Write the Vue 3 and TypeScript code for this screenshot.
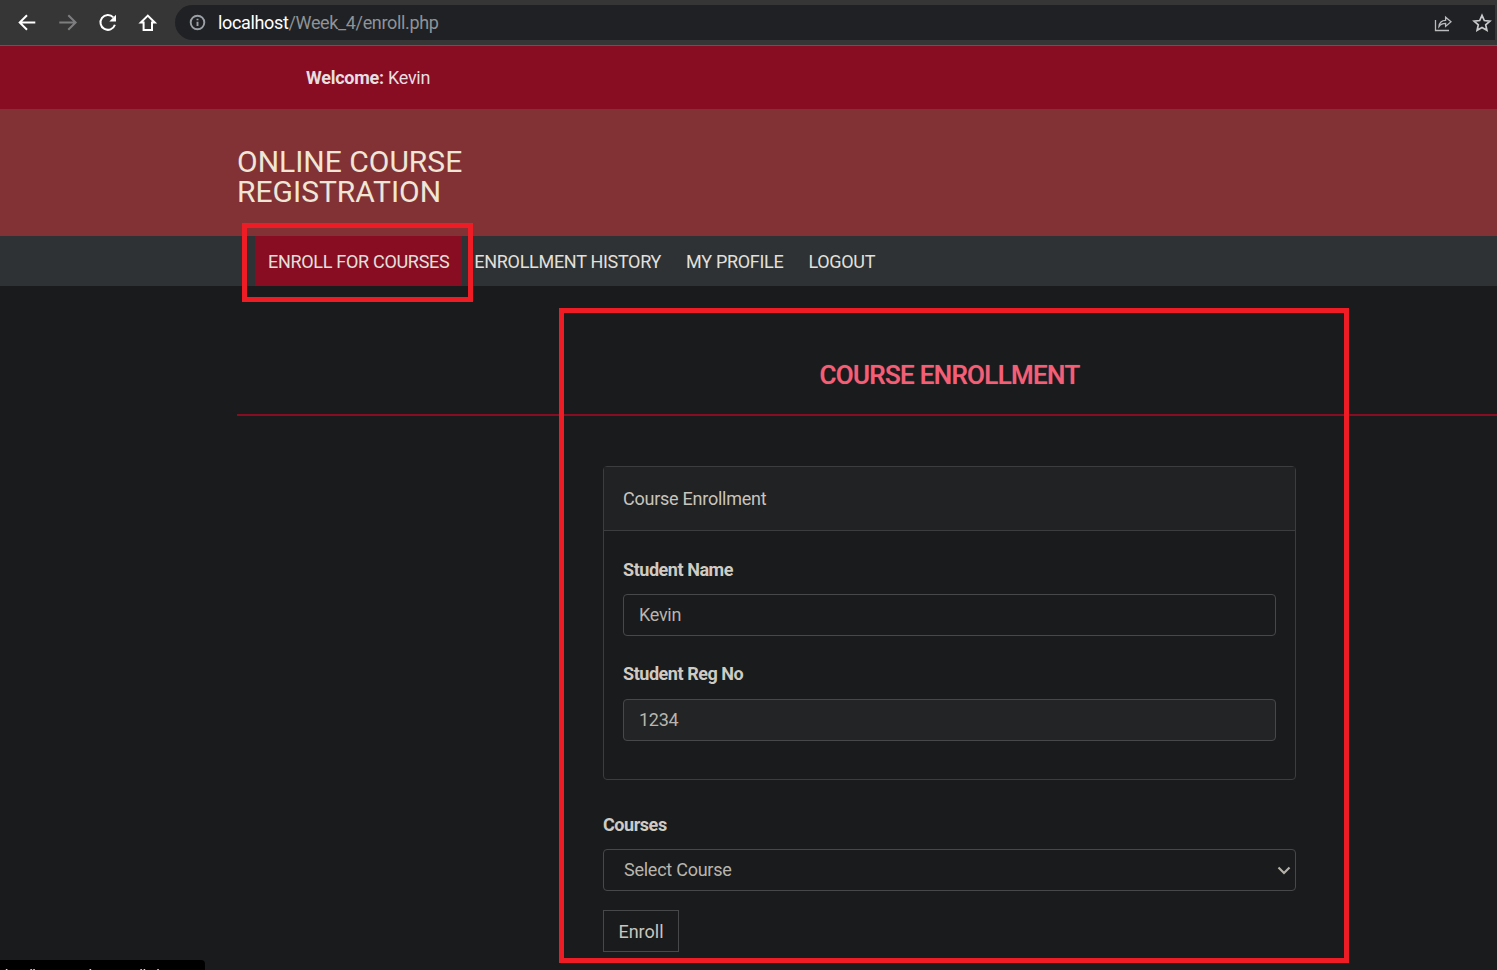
<script setup lang="ts">
import { ref } from 'vue'

const navItems = ['ENROLL FOR COURSES', 'ENROLLMENT HISTORY', 'MY PROFILE', 'LOGOUT']
const studentName = ref('Kevin')
const regNo = ref('1234')
</script>

<template>
  <div class="page">
    <!-- browser toolbar -->
    <div class="browser-bar">
      <div class="nav-icons">
        <svg class="ic" viewBox="0 0 24 24"><path d="M20.300 11.500H5M12 4.200 4.700 11.500 12 18.800" /></svg>
        <svg class="ic dim" viewBox="0 0 24 24"><path d="M4.300 11.500H20M13.300 4.200l7.300 7.300-7.300 7.300" /></svg>
        <svg class="ic" viewBox="0 0 24 24"><path d="M19.900 13.800A7.400 7.400 0 1 1 18.300 6.400" /><path class="fill" d="M21 3.800v6.700h-6.700z" /></svg>
        <svg class="ic" viewBox="0 0 24 24"><path d="M12.800 4.600 5.800 11.600H8.600v7.400h8.400v-7.400h2.800z" /></svg>
      </div>
      <div class="url-pill">
        <svg class="info" viewBox="0 0 16 16">
          <circle cx="8" cy="8" r="6.400" />
          <path d="M8 7.200v4M8 4.400v1.500" />
        </svg>
        <span class="url"><span class="host">localhost</span>/Week_4/enroll.php</span>
        <svg class="share" viewBox="0 0 20 20">
          <path d="M2.500 7v10.500h13.500M6 13.500c.4-4 3-6.200 6.600-6.200V4.200l5.400 4.600-5.400 4.600v-3c-2.800 0-5 .9-6.600 3.100z" />
        </svg>
        <svg class="star" viewBox="0 0 20 20">
          <path d="M10 2.300l2.300 5.200 5.600.6-4.200 3.700 1.200 5.500L10 14.500l-4.900 2.800 1.200-5.500-4.200-3.700 5.600-.6z" />
        </svg>
      </div>
    </div>

    <div class="welcome-bar">
      <div class="welcome"><strong>Welcome:</strong> Kevin</div>
    </div>

    <header class="banner">
      <h1>ONLINE COURSE<br />REGISTRATION</h1>
    </header>

    <nav class="main-nav">
      <a
        v-for="(item, i) in navItems"
        :key="item"
        class="nav-link"
        :class="{ active: i === 0 }"
      >{{ item }}</a>
    </nav>

    <main class="content">
      <div class="head-row">
        <h2>COURSE ENROLLMENT</h2>
      </div>

      <form class="enroll-form" @submit.prevent>
        <section class="card">
          <div class="card-header">Course Enrollment</div>
          <div class="card-body">
            <label>Student Name</label>
            <input v-model="studentName" class="field" type="text" />
            <label class="reg-label">Student Reg No</label>
            <input v-model="regNo" class="field readonly" type="text" readonly />
          </div>
        </section>

        <label class="courses-label">Courses</label>
        <div class="select-box">
          <span class="select-text">Select Course</span>
          <svg class="chevron" viewBox="0 0 16 16"><path d="M2.500 5.500 8 11l5.500-5.500" /></svg>
        </div>

        <button class="enroll-btn" type="submit">Enroll</button>
      </form>
    </main>

    <!-- red annotation frames drawn over the capture -->
    <div class="mark mark-nav"></div>
    <div class="mark mark-form"></div>

    <div class="status-tip">localhost/Week_4/enroll.php</div>
  </div>
</template>

<style scoped>
.page {
  position: relative;
  height: 970px;
  overflow: hidden;
  background-color: #191b1d;
  color: #c9c5bd;
  font-family: Roboto, "Liberation Sans", sans-serif;
}

.browser-bar {
  height: 46px;
  box-sizing: border-box;
  padding: 5px 0 0 15px;
  display: flex;
  background-color: #363636;
  border-bottom: 1px solid #5a5a58;
}

.nav-icons {
  display: flex;
  gap: 16px;
  width: 160px;
  height: 35px;
  align-items: center;
}

.ic {
  width: 24px;
  height: 24px;
  fill: none;
  stroke: #fff;
  stroke-width: 2;
}

.ic.dim { stroke: #7d7e80; }
.ic .fill { fill: #fff; stroke: none; }

.url-pill {
  flex: 1;
  height: 35px;
  display: flex;
  align-items: center;
  padding-left: 14px;
  background-color: #202124;
  border-radius: 18px 0 0 18px;
  margin-right: 2px;
}

.info {
  width: 17px;
  height: 17px;
  fill: none;
  stroke: #9aa0a6;
  stroke-width: 1.800;
}

.url {
  flex: 1;
  margin-left: 12px;
  font-size: 18px;
  color: #8f9397;
  letter-spacing: -0.35px;
}

.host { color: #fff; }

.share {
  width: 20px;
  height: 20px;
  margin-right: 19px;
  fill: none;
  stroke: #b9bbbe;
  stroke-width: 1.300;
}

.star {
  width: 20px;
  height: 20px;
  margin-right: 3px;
  fill: none;
  stroke: #c8cacc;
  stroke-width: 1.700;
}

.welcome-bar {
  height: 63px;
  display: flex;
  align-items: center;
  padding-left: 306px;
  background-color: #880d23;
  color: #e6dfe0;
  font-size: 18px;
  letter-spacing: -0.27px;
}

.banner {
  height: 127px;
  box-sizing: border-box;
  padding: 38px 0 0 237px;
  background-color: #823235;
}

h1 {
  margin: 0;
  font-size: 30px;
  font-weight: 400;
  line-height: 30px;
  color: #efe6d6;
}

.main-nav {
  height: 50px;
  display: flex;
  padding-left: 255px;
  background-color: #2e3235;
}

.nav-link {
  height: 50px;
  line-height: 52px;
  padding-right: 25px;
  font-size: 18px;
  letter-spacing: -0.3px;
  color: #e2e0dc;
  white-space: nowrap;
}

.nav-link.active {
  padding: 0 13px;
  margin-right: 12px;
  background-color: #880d23;
}

.content {
  margin-left: 237px;
}

.head-row {
  height: 130px;
  box-sizing: border-box;
  padding-top: 71px;
  border-bottom: 2px solid #880d23;
}

h2 {
  margin: 0 0 0 326px;
  width: 773px;
  text-align: center;
  font-size: 26px;
  font-weight: 500;
  line-height: 36px;
  letter-spacing: -0.7px;
  color: #f45f76;
  text-shadow: 0 0 1px rgba(244, 95, 118, 0.6);
}

.enroll-form {
  width: 693px;
  margin: 50px 0 0 366px;
  font-size: 18px;
}

.card {
  height: 314px;
  box-sizing: border-box;
  background-color: #191b1d;
  border: 1px solid #3b3d3f;
  border-radius: 4px;
}

.card-header {
  height: 64px;
  box-sizing: border-box;
  padding: 0 19px;
  line-height: 63px;
  background-color: #202224;
  border-bottom: 1px solid #3b3d3f;
  letter-spacing: -0.25px;
}

.card-body {
  padding: 26px 19px 0;
}

label {
  display: block;
  height: 28px;
  line-height: 26px;
  margin-bottom: 9px;
  font-weight: 700;
  letter-spacing: -0.45px;
  color: #cfcbc3;
}

.reg-label {
  margin-bottom: 10px;
}

.field {
  display: block;
  width: 100%;
  height: 42px;
  box-sizing: border-box;
  padding: 0 15px 2px;
  margin-bottom: 25px;
  background-color: #191b1d;
  border: 1px solid #46484a;
  border-radius: 4px;
  font: inherit;
  letter-spacing: -0.3px;
  color: #b9b5ad;
  outline: none;
}

.field.readonly { background-color: #222426; }

.courses-label {
  margin-top: 32px;
}

.select-box {
  height: 42px;
  box-sizing: border-box;
  padding: 0 3px 0 20px;
  display: flex;
  align-items: center;
  justify-content: space-between;
  border: 1px solid #46484a;
  border-radius: 4px;
  letter-spacing: -0.25px;
  color: #b9b5ad;
}

.select-text {
  margin-bottom: 2px;
}

.chevron {
  width: 16px;
  height: 16px;
  fill: none;
  stroke: #b5b1a9;
  stroke-width: 2.200;
}

.enroll-btn {
  display: block;
  width: 76px;
  height: 42px;
  margin-top: 19px;
  padding: 0;
  background-color: transparent;
  border: 1px solid #46484a;
  font: inherit;
  color: #c9c5bd;
}

.mark {
  position: absolute;
  box-sizing: border-box;
  border: 5px solid #ee1c25;
}

.mark-nav {
  left: 242px;
  top: 223px;
  width: 231px;
  height: 79px;
}

.mark-form {
  left: 559px;
  top: 308px;
  width: 790px;
  height: 655px;
}

.status-tip {
  position: absolute;
  left: 0;
  top: 960px;
  width: 205px;
  height: 30px;
  box-sizing: border-box;
  padding: 6px 0 0 5px;
  background-color: #000;
  border-radius: 0 4px 0 0;
  color: #fff;
  font-size: 13px;
  line-height: 17px;
  white-space: nowrap;
  overflow: hidden;
}
</style>

<style>
html, body { background: #191b1d; }
</style>
